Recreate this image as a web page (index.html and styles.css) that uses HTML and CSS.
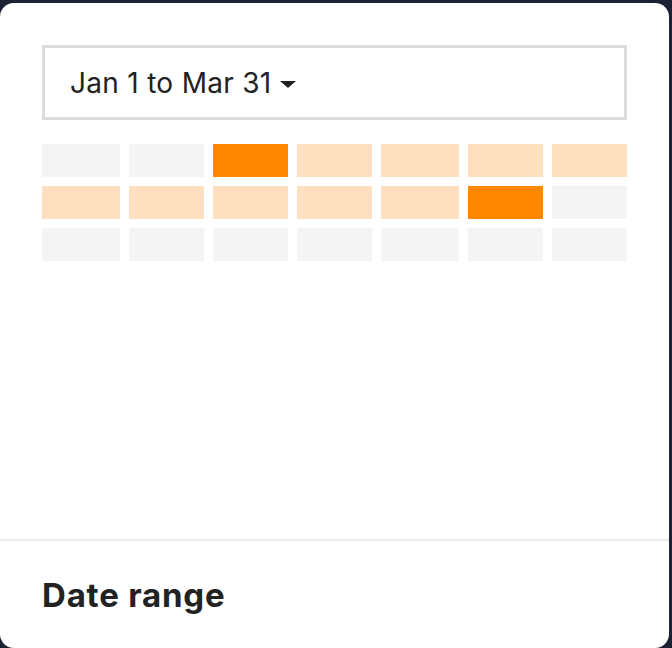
FILE: index.html
```html
<!DOCTYPE html>
<html lang="en">
<head>
  <meta charset="UTF-8">
  <title>Date range</title>
  <link rel="stylesheet" href="styles.css">
</head>
<body>
  <div class="card">
    <div class="card-body">
      <div class="range-select">Jan 1 to Mar 31 <span class="caret"></span></div>
      <div class="heatmap">
        <div class="cell"></div>
        <div class="cell"></div>
        <div class="cell hot"></div>
        <div class="cell warm"></div>
        <div class="cell warm"></div>
        <div class="cell warm"></div>
        <div class="cell warm"></div>
        <div class="cell warm"></div>
        <div class="cell warm"></div>
        <div class="cell warm"></div>
        <div class="cell warm"></div>
        <div class="cell warm"></div>
        <div class="cell hot"></div>
        <div class="cell"></div>
        <div class="cell"></div>
        <div class="cell"></div>
        <div class="cell"></div>
        <div class="cell"></div>
        <div class="cell"></div>
        <div class="cell"></div>
        <div class="cell"></div>
      </div>
    </div>
    <div class="card-footer">Date range</div>
  </div>
</body>
</html>
```

FILE: styles.css
```css
html, body{margin:0; height:100%;}
body{background:#1b2233; font-family:Inter, "Noto Sans", sans-serif; color:#222;}
.card{width:669px; height:645px; margin-top:3px; background:#fff; border-radius:14px; display:flex; flex-direction:column; overflow:hidden;}
.card-body{flex:1; padding:42px 42px 0;}
.range-select{height:69px; border:3px solid #dcdcdc; padding-left:25px; display:flex; align-items:center; font-size:28px; line-height:1; letter-spacing:0.3px;}
.caret{display:inline-block; width:0; height:0; margin-left:8px; margin-top:3px; border-left:8px solid transparent; border-right:8px solid transparent; border-top:7px solid #222;}
.heatmap{display:grid; grid-template-columns:78px 75px 75px 75px 78px 75px 75px; grid-auto-rows:33px; gap:9px; margin-top:24px;}
.cell{background:#f4f4f4;}
.cell.warm{background:#fee0c1;}
.cell.hot{background:#ff8800;}
.card-footer{border-top:2px solid #ebebeb; height:107px; padding-left:42px; display:flex; align-items:center; font-size:33px; font-weight:700; letter-spacing:0.8px;}
```
